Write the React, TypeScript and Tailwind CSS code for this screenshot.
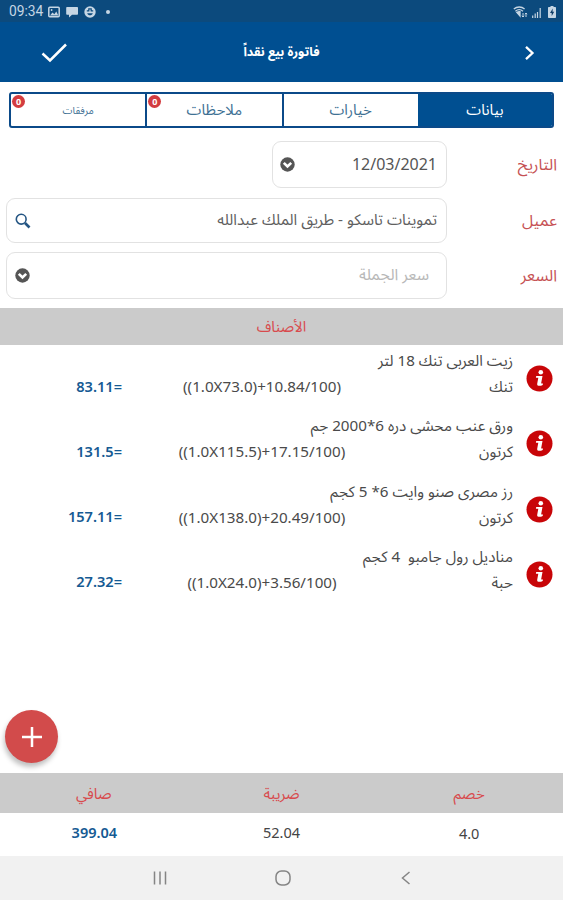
import React from 'react';
import { clsx } from 'clsx';

interface Item {
  name: string;
  unit: string;
  formula: string;
  total: string;
}

const items: Item[] = [
  { name: 'زيت العربى تنك 18 لتر', unit: 'تنك', formula: '((1.0X73.0)+10.84/100)', total: '83.11=' },
  { name: 'ورق عنب محشى دره 6*2000 جم', unit: 'كرتون', formula: '((1.0X115.5)+17.15/100)', total: '131.5=' },
  { name: 'رز مصرى صنو وايت 6* 5 كجم', unit: 'كرتون', formula: '((1.0X138.0)+20.49/100)', total: '157.11=' },
  { name: 'مناديل رول جامبو  4 كجم', unit: 'حبة', formula: '((1.0X24.0)+3.56/100)', total: '27.32=' },
];

const tabs = [
  { label: 'بيانات', active: true },
  { label: 'خيارات' },
  { label: 'ملاحظات', badge: 0 },
  { label: 'مرفقات', badge: 0, small: true },
];

const StatusBar = () => (
  <div dir="ltr" className="flex h-[22px] items-center justify-between bg-[#0c4a7d] pr-[7px] pl-[9px] text-[#c6d6e4]">
    <div className="flex items-center pt-[2px]">
      <span className="w-[39px] font-[Roboto] text-[13.8px] leading-none">09:34</span>
      <svg className="h-3 w-3" viewBox="0 0 12 12" fill="none" stroke="currentColor" strokeWidth="1.5">
        <rect x="0.8" y="1.2" width="10.4" height="9.6" rx="1" />
        <path d="M2 9.5 4.5 6.5l1.8 1.8 2-2.8L10.3 9.5z" fill="currentColor" stroke="none" />
        <circle cx="3.6" cy="4" r="0.9" fill="currentColor" stroke="none" />
      </svg>
      <svg className="ml-1.5 h-3 w-3" viewBox="0 0 12 12" fill="currentColor">
        <path d="M1 1h10.2a.8.8 0 0 1 .8.8V8a.8.8 0 0 1-.8.8H6L3 11.6V8.8H1a.8.8 0 0 1-.8-.8V1.8A.8.8 0 0 1 1 1z" />
      </svg>
      <svg className="ml-1.5 h-3 w-3" viewBox="0 0 12 12">
        <circle cx="6" cy="6" r="5.7" fill="currentColor" />
        <path d="M2.800 4.800h2v-2h2.400v2h2" fill="none" stroke="#0c4a7d" strokeWidth="1.2" />
        <path d="M3.200 7.200h5.600c-.5 1.500-1.500 2.100-2.800 2.100s-2.300-.6-2.800-2.100z" fill="#0c4a7d" />
      </svg>
      <span className="ml-[10px] h-1 w-1 rounded-full bg-current" />
    </div>
    <div className="flex items-center gap-1 pt-px">
      <svg className="h-3 w-[15px]" viewBox="0 0 15 12" fill="none" stroke="currentColor" strokeWidth="1.3">
        <path d="M.8 3C4 .3 8.500.3 11.600 3M2.400 5.200c2.300-1.900 5.300-1.900 7.600 0" />
        <path d="M3.800 6.400 7 10V5.600C5.800 5.500 4.700 5.800 3.800 6.400z" fill="currentColor" />
        <path d="M10 7v4M8.800 9.800 10 11l1.200-1.200M13 11V7M11.900 8.200 13 7l1.100 1.200" strokeWidth="1" />
      </svg>
      <svg className="h-3 w-[9px]" viewBox="0 0 9 12" stroke="currentColor" fill="none">
        <path d="M.7 9.500V12M3.200 7.500V12M5.500 6V12" strokeWidth="1.2" />
        <path d="M8.200 2V12" strokeWidth="1.2" />
      </svg>
      <svg className="ml-[3px] h-3 w-2" viewBox="0 0 8 12">
        <path d="M2.500 0h3v1h1.700a.8.8 0 0 1 .8.8v9.400a.8.8 0 0 1-.8.800H.8a.8.8 0 0 1-.8-.8V1.800A.8.8 0 0 1 .8 1h1.700z" fill="currentColor" />
        <path d="M4.800 2.600 2 7h1.700v3L6.200 5.800H4.500z" fill="#0c3b66" />
      </svg>
    </div>
  </div>
);

const Header = () => (
  <header className="flex h-[60px] items-center bg-[#004f91] text-white">
    <div className="flex w-[67px] justify-center pt-0.5">
      <svg className="h-4 w-3" viewBox="0 0 12 16" fill="none" stroke="currentColor" strokeWidth="2.3">
        <path d="M2 1.800 8.500 8 2 14.200" />
      </svg>
    </div>
    <h1 className="flex-1 text-center text-[12.6px] font-bold">فاتورة بيع نقداً</h1>
    <div className="flex w-[67px] items-center pt-0.5">
      <svg className="h-5 w-[26px]" viewBox="0 0 26 20" fill="none" stroke="currentColor" strokeWidth="2.5">
        <path d="M1.500 10.500 9 17.500 25 1.500" />
      </svg>
    </div>
  </header>
);

const Tabs = () => (
  <div className="mx-[9px] mt-[10px] flex h-[36px] overflow-hidden rounded-[3px] border-2 border-[#0b4a89]">
    {tabs.map((tab, i) => (
      <div
        key={tab.label}
        className={clsx(
          'relative flex flex-1 items-center justify-center pb-px leading-none',
          i > 1 && 'border-r-2 border-[#0b4a89]',
          tab.active ? 'bg-[#004f91] text-white' : 'text-[#3f7194]',
          tab.small ? 'text-[10px]' : 'text-[15px]'
        )}
      >
        {tab.label}
        {tab.badge !== undefined && (
          <span className="absolute top-px left-px flex h-[13px] w-[13px] items-center justify-center rounded-full bg-[#d33c40] text-[9px] leading-none font-bold text-white">
            {tab.badge}
          </span>
        )}
      </div>
    ))}
  </div>
);

const ChevronBadge = () => (
  <svg className="h-[15px] w-[15px] shrink-0" viewBox="0 0 15 15">
    <circle cx="7.5" cy="7.5" r="7.2" fill="#555" />
    <path d="M3.800 5.800 7.500 9.500 11.200 5.800" fill="none" stroke="#fff" strokeWidth="2.6" />
  </svg>
);

const Field: React.FC<{ label: string; boxClass: string; children: React.ReactNode }> = ({ label, boxClass, children }) => (
  <div className="flex items-center">
    <label className="w-[116px] shrink-0 pr-[6px] pb-px text-[16px] leading-none text-[#c65254]">{label}</label>
    <div className={clsx('flex items-center justify-between rounded-[9px] border-[1.5px] border-[#e2e2e2] pr-[9px]', boxClass)}>
      {children}
    </div>
  </div>
);

const InfoIcon = () => (
  <svg className="h-[27px] w-[27px]" viewBox="0 0 27 27">
    <circle cx="13.5" cy="13.5" r="13" fill="#c80508" />
    <circle cx="14.8" cy="7.3" r="2.3" fill="#fff" />
    <path d="M10.200 11h6.300l-1.300 6.900c-.1.700.5.900 1.800.5l-.3 1.600c-2.600 1.300-6 1.300-5.500-1.300l1.100-6H9.900z" fill="#fff" />
  </svg>
);

const ItemRow: React.FC<{ item: Item }> = ({ item }) => (
  <div className="flex h-[65.3px] pr-[10px]">
    <div className="w-[40px] pt-[20px]">
      <InfoIcon />
    </div>
    <div className="flex-1 text-[15.2px] text-[#4a4a4a]">
      <div className="flex h-[31px] items-center whitespace-pre">{item.name}</div>
      <div className="flex h-[22px] items-center pb-px">
        <div className="w-[142px]">{item.unit}</div>
        <div dir="ltr" className="w-[218px] text-center">{item.formula}</div>
        <div dir="ltr" className="flex-1 pr-[31px] text-right text-[14.6px] font-semibold text-[#155a93]">{item.total}</div>
      </div>
    </div>
  </div>
);

const Totals = () => (
  <>
    <div className="grid h-[40px] grid-cols-3 items-center bg-[#cbcbcb] text-center text-[15px] text-[#d84a4d]">
      <div>خصم</div>
      <div>ضريبة</div>
      <div>صافي</div>
    </div>
    <div className="grid h-[43px] grid-cols-3 items-center pb-[3px] text-center text-[14.5px] text-[#444]">
      <div className="pt-0.5">4.0</div>
      <div>52.04</div>
      <div className="pl-px font-semibold text-[#155a93]">399.04</div>
    </div>
  </>
);

const NavBar = () => (
  <div dir="ltr" className="flex h-[44px] items-center justify-center gap-[105px] bg-[#f1f1f1] pl-[2px] text-[#858585]">
    <svg className="h-[18px] w-[18px]" viewBox="0 0 18 18" stroke="currentColor" strokeWidth="1.5">
      <path d="M3.500 2.500v13M9 2.500v13M14.500 2.500v13" />
    </svg>
    <svg className="h-[18px] w-[18px]" viewBox="0 0 18 18" fill="none" stroke="currentColor" strokeWidth="1.5">
      <rect x="2" y="2" width="14" height="14" rx="5.5" />
    </svg>
    <svg className="h-[18px] w-[18px]" viewBox="0 0 18 18" fill="none" stroke="currentColor" strokeWidth="1.5">
      <path d="M12.500 3 5.500 9l7 6" />
    </svg>
  </div>
);

export default function App() {
  return (
    <div dir="rtl" className="flex h-[900px] w-[563px] flex-col overflow-hidden bg-white font-['Noto_Sans','Noto_Sans_Arabic','DejaVu_Sans',sans-serif]">
      <StatusBar />
      <Header />
      <Tabs />

      <div className="mt-[13px] flex flex-col">
        <Field label="التاريخ" boxClass="h-[47px] w-[175px] pl-[7px]">
          <span className="pb-0.5 text-[16px] text-[#555]">12/03/2021</span>
          <ChevronBadge />
        </Field>
        <div className="mt-[10px]">
          <Field label="عميل" boxClass="h-[45px] w-[441px] pl-[8px]">
            <span className="pb-0.5 text-[15.3px] text-[#606060]">تموينات تاسكو - طريق الملك عبدالله</span>
            <svg className="h-4 w-4" viewBox="0 0 16 16" fill="none" stroke="#245583">
              <circle cx="6.2" cy="6.2" r="4.9" strokeWidth="1.6" />
              <path d="m10 10 4.500 4.500" strokeWidth="2.6" />
            </svg>
          </Field>
        </div>
        <div className="mt-[9px]">
          <Field label="السعر" boxClass="h-[47px] w-[441px] pl-[8px]">
            <span className="pr-[8px] pb-px text-[15.7px] text-[#b8b8b8]">سعر الجملة</span>
            <ChevronBadge />
          </Field>
        </div>
      </div>

      <div className="mt-[9px] flex h-[37px] items-center justify-center bg-[#cbcbcb] pb-px text-[14.8px] text-[#d84a4d]">
        الأصناف
      </div>

      <div className="relative flex-1">
        {items.map((item) => (
          <ItemRow key={item.name} item={item} />
        ))}
        <button className="absolute bottom-[10px] left-[5px] flex h-[53px] w-[53px] items-center justify-center rounded-full bg-[#d24b4b] text-white shadow-[-1px_4px_5px_rgba(0,0,0,0.25)]">
          <svg className="h-5 w-5" viewBox="0 0 20 20" stroke="currentColor" strokeWidth="2.5">
            <path d="M10 0v20M0 10h20" />
          </svg>
        </button>
      </div>

      <Totals />
      <NavBar />
    </div>
  );
}
